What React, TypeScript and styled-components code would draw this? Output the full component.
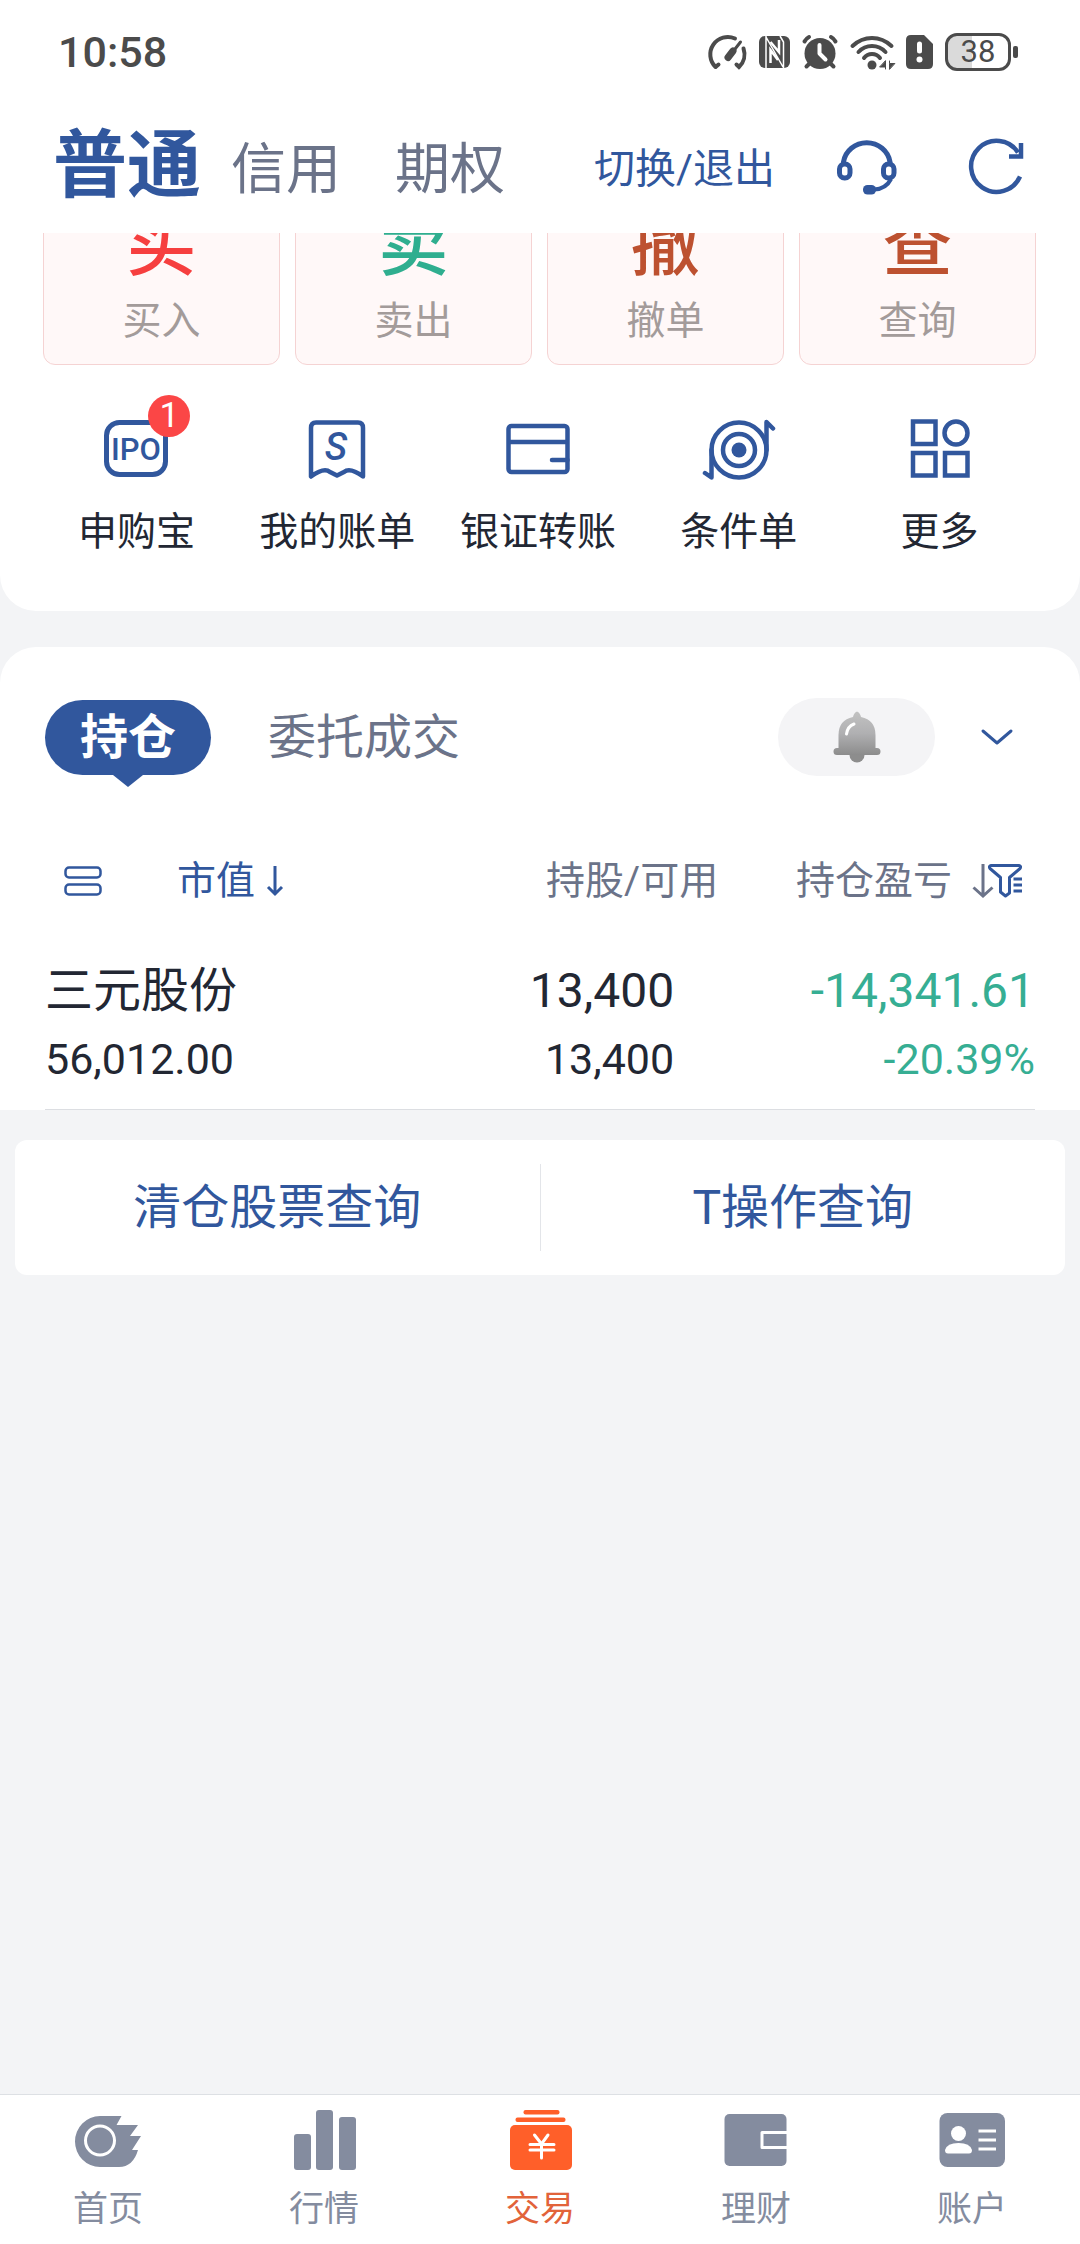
import React from "react";
import styled, { createGlobalStyle, css } from "styled-components";

const blue = "#31579d";
const slate = "#6b7389";
const ink = "#222733";
const green = "#36ae93";
const tabGray = "#848c9f";

const GlobalStyle = createGlobalStyle`
  * { box-sizing: border-box; }
  body {
    margin: 0;
    background: #f3f4f6;
    color: ${ink};
    font-family: Roboto, "Noto Sans CJK SC", sans-serif;
    font-size: 39px;
  }
  button {
    margin: 0;
    padding: 0;
    border: 0;
    background: none;
    color: inherit;
    font: inherit;
    cursor: pointer;
  }
  a { color: inherit; text-decoration: none; }
  svg { display: block; flex: none; overflow: visible; }
`;

const Page = styled.div`
  display: flex;
  flex-direction: column;
  min-height: 100vh;
`;

/* status bar */

const StatusBar = styled.div`
  display: flex;
  align-items: center;
  justify-content: space-between;
  padding: 26px 62px 0 58px;
  background: #fff;
  color: #4b4b4b;
`;

const Clock = styled.time`
  font-size: 43px;
  font-weight: 500;
  line-height: 52px;
`;

const StatusIcons = styled.div`
  display: flex;
  align-items: center;
  gap: 12px;
`;

const Battery = styled.div`
  display: flex;
  align-items: center;
  gap: 2px;
`;

const BatteryBody = styled.div`
  width: 66px;
  height: 38px;
  border: 3px solid #4b4b4b;
  border-radius: 12px;
  background: linear-gradient(90deg, #dadada 40%, #fff 40%);
  font-size: 31px;
  line-height: 32px;
  text-align: center;
`;

const BatteryTip = styled.div`
  width: 5px;
  height: 12px;
  border-radius: 2px;
  background: #4b4b4b;
`;

/* header */

const Header = styled.header`
  display: flex;
  align-items: center;
  justify-content: space-between;
  min-height: 155px;
  padding: 20px 51px 0 53px;
  background: #fff;
`;

const AccountTabs = styled.nav`
  display: flex;
  align-items: center;
  gap: 30px;
`;

const AccountTab = styled.button<{ $active?: boolean }>`
  padding: 6px 24px 0 0;
  color: ${slate};
  font-size: 55px;
  line-height: 80px;
  ${(p) =>
    p.$active &&
    css`
      padding: 0;
      color: ${blue};
      font-size: 74px;
      font-weight: 700;
    `}
`;

const HeaderActions = styled.div`
  display: flex;
  align-items: center;
  gap: 60px;
`;

const HeaderIcons = styled.div`
  display: flex;
  gap: 66px;
`;

const SwitchButton = styled.button`
  padding-top: 6px;
  color: ${blue};
  font-size: 41px;
  line-height: 48px;
`;

const IconButton = styled.button<{ $width: number }>`
  display: flex;
  align-items: center;
  justify-content: center;
  width: ${(p) => p.$width}px;
  height: 64px;
`;

/* upper panel */

const UpperPanel = styled.section`
  border-radius: 0 0 36px 36px;
  background: #fff;
`;

const ActionStrip = styled.div`
  display: grid;
  grid-template-columns: repeat(4, 1fr);
  align-content: end;
  gap: 15px;
  height: 132px;
  padding: 0 44px 0 43px;
  overflow: hidden;
`;

const ActionCard = styled.button`
  display: flex;
  flex-direction: column;
  align-items: center;
  gap: 20px;
  padding: 32px 0 23px;
  border: 1px solid #f5d3d3;
  border-radius: 12px;
  background: #fff8f8;
`;

const ActionGlyph = styled.span<{ $color: string }>`
  color: ${(p) => p.$color};
  font-size: 70px;
  font-weight: 500;
  line-height: 70px;
`;

const ActionLabel = styled.span`
  color: #a39b9a;
  font-size: 39px;
  line-height: 40px;
`;

const Shortcuts = styled.div`
  display: grid;
  grid-template-columns: repeat(5, 1fr);
  padding: 49px 40px 55px 36px;
`;

const Shortcut = styled.button`
  display: flex;
  flex-direction: column;
  align-items: center;
  gap: 22px;
  line-height: 48px;
  white-space: nowrap;
`;

const ShortcutIcon = styled.span`
  position: relative;
  color: ${blue};
`;

const Badge = styled.span`
  position: absolute;
  top: -19px;
  right: -18px;
  width: 42px;
  height: 42px;
  border-radius: 50%;
  background: #fb4646;
  color: #fff;
  font-size: 35px;
  line-height: 42px;
  text-align: center;
`;

/* holdings panel */

const HoldingsPanel = styled.section`
  margin-top: 36px;
  padding: 51px 45px 0;
  border-radius: 36px 36px 0 0;
  background: #fff;
`;

const HoldingsBar = styled.div`
  display: flex;
  align-items: center;
  height: 78px;
`;

const ActiveTab = styled.button`
  position: relative;
  padding: 0 35px;
  border-radius: 38px;
  background: ${blue};
  color: #fff;
  font-size: 48px;
  font-weight: 700;
  line-height: 75px;

  &::after {
    content: "";
    position: absolute;
    top: 100%;
    left: 50%;
    margin-left: -15px;
    border: 15px solid transparent;
    border-top: 12px solid ${blue};
    border-bottom: 0;
  }
`;

const PlainTab = styled.button`
  margin-left: 57px;
  margin-right: auto;
  color: ${slate};
  font-size: 48px;
  line-height: 75px;
`;

const BellButton = styled.button`
  display: flex;
  align-items: center;
  justify-content: center;
  width: 157px;
  height: 78px;
  margin-right: 24px;
  border-radius: 39px;
  background: #f4f4f6;
`;

const HoldingsTable = styled.table`
  width: 100%;
  margin-top: 72px;
  border-collapse: collapse;
  table-layout: fixed;
`;

const HeadCell = styled.th<{ $width: string; $active?: boolean }>`
  width: ${(p) => p.$width};
  height: 66px;
  padding: 0;
  color: ${(p) => (p.$active ? blue : slate)};
  font-size: 39px;
  font-weight: 400;
  line-height: 66px;
`;

const HeadContent = styled.div<{ $start?: boolean }>`
  display: flex;
  align-items: center;
  justify-content: ${(p) => (p.$start ? "flex-start" : "flex-end")};
`;

const ListToggle = styled.button`
  padding: 0 75px 0 19px;
`;

const SortButton = styled.button`
  display: flex;
  align-items: center;
  gap: 12px;
`;

const FilterSort = styled(SortButton)`
  gap: 20px;
  padding-right: 13px;
`;

const Cell = styled.td<{ $tone?: string; $inset?: boolean }>`
  padding: 43px ${(p) => (p.$inset ? 44 : 0)}px 16px 0;
  border-bottom: 1px solid #dcdee2;
  color: ${(p) => p.$tone || ink};
  text-align: right;

  &:first-child { text-align: left; }
`;

const Primary = styled.div`
  font-size: 48px;
  line-height: 68px;
`;

const Secondary = styled.div`
  font-size: 43px;
  line-height: 68px;
`;

const QueryBar = styled.div`
  display: flex;
  align-items: center;
  height: 135px;
  margin: 30px 15px 0;
  border-radius: 12px;
  background: #fff;
`;

const QueryLink = styled.a`
  flex: 1;
  color: ${blue};
  font-size: 48px;
  line-height: 87px;
  text-align: center;

  & + & { border-left: 1px solid #e3e5e9; }
`;

/* bottom navigation */

const BottomNav = styled.nav`
  display: grid;
  grid-template-columns: repeat(5, 1fr);
  margin-top: auto;
  border-top: 1px solid #dde0e4;
  background: #fff;
`;

const NavItem = styled.a<{ $active?: boolean }>`
  display: flex;
  flex-direction: column;
  align-items: center;
  gap: 18px;
  padding: 13px 0 14px;
  color: ${(p) => (p.$active ? "#e2633a" : tabGray)};
  font-size: 35px;
  line-height: 40px;
`;

/* drawings */

const GaugeIcon = () => (
  <svg width="39" height="36" fill="none" stroke="currentColor" strokeWidth="4" strokeLinecap="round">
    <path d="M7.6 33 L10.5 30.5 M7.6 33 A17.5 17.5 0 0 1 27 4.5" />
    <path d="M35.5 14.5 A17.5 17.5 0 0 1 31 33 L28.5 30.5" />
    <path d="M20 24 L32.5 8" strokeWidth="3" />
    <path d="M20 23.5 L25 17" strokeWidth="7" />
  </svg>
);

const NfcIcon = () => (
  <svg width="31" height="32" fill="none">
    <rect width="31" height="32" rx="6" fill="currentColor" />
    <g stroke="#fff">
      <path d="M7 0 V32 M7 1 L24 31 M24.5 32 V6 L21 0" strokeWidth="1.5" />
      <path d="M11.5 27 V14 L19 24 M11.5 6 L20 16 V4" strokeWidth="2.5" />
    </g>
  </svg>
);

const AlarmIcon = () => (
  <svg width="36" height="36" fill="none" stroke="currentColor" strokeWidth="4" strokeLinecap="round" strokeLinejoin="round">
    <circle cx="18" cy="19.5" r="15.5" fill="currentColor" stroke="none" />
    <path d="M2.5 7.5 Q4 4.5 7 3 M33.5 7.5 Q32 4.5 29 3 M4.5 32.5 L8 29 M31.5 32.5 L28 29" />
    <path d="M17.5 11 V19.5 L23.5 25.5" stroke="#fff" />
  </svg>
);

const WifiIcon = () => (
  <svg width="44" height="36" fill="none" stroke="currentColor" strokeWidth="4" strokeLinecap="round">
    <path d="M2.5 12 Q11 4 22 4 Q33 4 41.5 12" />
    <path d="M8.5 18 Q14 12 22 12 Q30 12 35.5 18" />
    <path d="M14 24 Q17 20 22 20 Q27 20 30 24" />
    <circle cx="22" cy="31" r="4.5" fill="currentColor" stroke="none" />
    <path d="M35.5 27 V33 H30 Z M35.5 33 V35 M39.5 35 V29.5 H44.5 Z M39.5 29 V27" fill="currentColor" strokeWidth="1" />
  </svg>
);

const SimIcon = () => (
  <svg width="27" height="34" fill="none">
    <path d="M5 0 H18 L27 9 V29 Q27 34 22 34 H5 Q0 34 0 29 V5 Q0 0 5 0 Z" fill="currentColor" />
    <path d="M13.5 9 V16" stroke="#fff" strokeWidth="5" strokeLinecap="round" />
    <circle cx="13.5" cy="24.5" r="3" fill="#fff" />
  </svg>
);

const HeadsetIcon = () => (
  <svg width="62" height="60" fill="none" stroke={blue} strokeWidth="5">
    <path d="M7.5 28 V26 A23.5 22.5 0 0 1 54 26 V28" />
    <rect x="3.5" y="28" width="10.5" height="14" rx="5" />
    <rect x="47.5" y="28" width="10.5" height="14" rx="5" />
    <path d="M55 43 Q50 53 38 53.5" strokeWidth="4" />
    <rect x="27" y="49" width="13" height="9.5" rx="4.5" fill={blue} stroke="none" />
  </svg>
);

const RefreshIcon = () => (
  <svg width="60" height="60" fill="none" stroke={blue} strokeWidth="4.5">
    <path d="M53 40.5 A25.5 25.5 0 1 1 51 16.5" />
    <path d="M54 7 V20.5 H42" />
  </svg>
);

const IpoIcon = () => (
  <svg width="72" height="72" fill="none" stroke="currentColor" strokeWidth="5">
    <rect x="6.5" y="8.5" width="59" height="52" rx="13" />
    <text x="36" y="46" fill="currentColor" stroke="none" fontSize="31" fontWeight="500" textAnchor="middle">
      IPO
    </text>
  </svg>
);

const BillIcon = () => (
  <svg width="72" height="72" fill="none" stroke="currentColor" strokeWidth="4.5" strokeLinejoin="round">
    <path d="M10 62.5 V14 Q10 8.5 15 8.5 H57 Q62 8.5 62 14 V62.5 Q49 53 43 58 L36 61.5 L29 58 Q23 53 10 62.5 Z" />
    <text x="35" y="46" fill="currentColor" stroke="none" fontSize="38" fontStyle="italic" fontWeight="500" textAnchor="middle">
      S
    </text>
  </svg>
);

const TransferIcon = () => (
  <svg width="72" height="72" fill="none" stroke="currentColor" strokeWidth="4.5">
    <rect x="6.5" y="12" width="59" height="46" rx="3" />
    <path d="M6.5 28 H65.5" />
    <path d="M50 46 H65.5" strokeLinecap="round" />
  </svg>
);

const TargetIcon = () => (
  <svg width="72" height="72" fill="none" stroke="currentColor" strokeWidth="4.5" strokeLinecap="round" strokeLinejoin="round">
    <circle cx="36" cy="36" r="27.5" />
    <circle cx="36" cy="36" r="16" />
    <circle cx="36" cy="36" r="7.5" fill="currentColor" stroke="none" />
    <path d="M8.5 36 V63.5 L2 59 M63.5 36 V8 L70 14.5" />
  </svg>
);

const MoreIcon = () => (
  <svg width="72" height="72" fill="none" stroke="currentColor" strokeWidth="4.5">
    <rect x="9" y="7.5" width="22.5" height="22.5" />
    <circle cx="52" cy="19" r="11.5" />
    <rect x="9" y="39" width="22.5" height="22.5" />
    <rect x="41" y="39" width="22.5" height="22.5" />
  </svg>
);

const BellIcon = () => (
  <svg width="48" height="52" fill="none">
    <defs>
      <linearGradient id="bellBody" x1="0" y1="0" x2="0" y2="1">
        <stop offset="0" stopColor="#c2c2c2" />
        <stop offset="0.5" stopColor="#b0b0b2" />
        <stop offset="1" stopColor="#8c8c8c" />
      </linearGradient>
    </defs>
    <circle cx="24" cy="44" r="7.5" fill="#8d8d8d" />
    <path
      d="M24 0.5 Q27 1.5 28 6 Q42.5 9 42.5 24 V37 H44 Q47.5 37 47.5 40.5 Q47.5 44 44 44 H4 Q0.5 44 0.5 40.5 Q0.5 37 4 37 H5.5 V24 Q5.5 9 20 6 Q21 1.5 24 0.5 Z"
      fill="url(#bellBody)"
    />
    <path d="M13.5 23 Q14.5 15.5 21 13" stroke="#fff" strokeWidth="3" strokeLinecap="round" />
  </svg>
);

const ChevronIcon = () => (
  <svg width="32" height="16" fill="none" stroke={blue} strokeWidth="3" strokeLinecap="round" strokeLinejoin="round">
    <path d="M2 2 L16 14 L30 2" />
  </svg>
);

const ListIcon = () => (
  <svg width="38" height="30" fill="none" stroke={blue} strokeWidth="2.5">
    <rect x="1.5" y="1.5" width="35" height="10" rx="3.5" />
    <rect x="1.5" y="18.5" width="35" height="10" rx="3.5" />
  </svg>
);

const DownArrowIcon = () => (
  <svg width="16" height="30" fill="none" stroke={blue} strokeWidth="3">
    <path d="M8 0 V28 M1 21 L8 28 L15 21" />
  </svg>
);

const SortFilterIcon = () => (
  <svg width="50" height="36" fill="none" strokeWidth="3">
    <path d="M11 1 V33 M1.5 24.5 L11 33 L20.5 24.5" stroke={slate} />
    <path
      d="M19 2.5 H47 Q49.5 3 48 5.5 L37.5 14.5 V30 L33.5 33 L28.5 29 V14.5 L18 5.5 Q16.5 3 19 2.5 Z M41.5 16 H50 M41.5 22 H50 M41.5 28 H50"
      stroke={blue}
      strokeLinejoin="round"
    />
  </svg>
);

const HomeNavIcon = () => (
  <svg width="72" height="64" fill="none">
    <path
      d="M28 8 H49.5 L44.5 17 H66 L58 28 H69 L60 42 H66 Q61 59 47 59 H28 A25 25.5 0 0 1 28 8 Z"
      fill="currentColor"
    />
    <circle cx="28" cy="32.5" r="14.5" stroke="#fff" strokeWidth="3" />
  </svg>
);

const MarketNavIcon = () => (
  <svg width="72" height="64" fill="currentColor">
    <rect x="6" y="26" width="17" height="36" rx="3" />
    <rect x="28" y="2" width="17" height="60" rx="3" />
    <rect x="51" y="9" width="17" height="53" rx="3" />
  </svg>
);

const TradeNavIcon = () => (
  <svg width="72" height="64" fill="#ff5f29">
    <rect x="19.5" y="2" width="36" height="4.5" rx="2" />
    <rect x="11.5" y="9.5" width="50" height="4.5" rx="2" />
    <rect x="6" y="17" width="62" height="45" rx="5" />
    <path d="M30.5 27 L37.5 36 L44 27 M26 36.5 H50 M26 42 H50 M37.5 36 V50" fill="none" stroke="#fff" strokeWidth="3" strokeLinecap="round" />
  </svg>
);

const WealthNavIcon = () => (
  <svg width="72" height="64" fill="none">
    <rect x="4.5" y="6" width="62" height="52" rx="5" fill="currentColor" />
    <path d="M67 24.5 H42 V39.5 H67" stroke="#fff" strokeWidth="3" strokeLinejoin="round" />
  </svg>
);

const ProfileNavIcon = () => (
  <svg width="72" height="64" fill="#fff">
    <rect x="3.5" y="5" width="65.5" height="54" rx="8" fill="currentColor" />
    <circle cx="22.5" cy="25.5" r="7.5" />
    <path d="M9 42 Q11 35 22.5 35 Q34 35 36 42 Q36 45.5 33 45.5 H12 Q9 45.5 9 42 Z" />
    <path d="M42.5 23 H60 M42.5 32 H60 M42.5 41 H60" stroke="#fff" strokeWidth="3" />
  </svg>
);

/* data */

const actions = [
  { glyph: "买", label: "买入", color: "#f63f3f" },
  { glyph: "卖", label: "卖出", color: "#2fae8f" },
  { glyph: "撤", label: "撤单", color: "#bd5130" },
  { glyph: "查", label: "查询", color: "#bd5130" },
];

const shortcuts = [
  { label: "申购宝", icon: <IpoIcon />, badge: 1 },
  { label: "我的账单", icon: <BillIcon /> },
  { label: "银证转账", icon: <TransferIcon /> },
  { label: "条件单", icon: <TargetIcon /> },
  { label: "更多", icon: <MoreIcon /> },
];

const holdings = [
  {
    name: "三元股份",
    value: "56,012.00",
    shares: "13,400",
    available: "13,400",
    profit: "-14,341.61",
    rate: "-20.39%",
  },
];

const navItems = [
  { label: "首页", icon: <HomeNavIcon /> },
  { label: "行情", icon: <MarketNavIcon /> },
  { label: "交易", icon: <TradeNavIcon />, active: true },
  { label: "理财", icon: <WealthNavIcon /> },
  { label: "账户", icon: <ProfileNavIcon /> },
];

export default function App() {
  return (
    <Page>
      <GlobalStyle />
      <StatusBar>
        <Clock>10:58</Clock>
        <StatusIcons>
          <GaugeIcon />
          <NfcIcon />
          <AlarmIcon />
          <WifiIcon />
          <SimIcon />
          <Battery>
            <BatteryBody>38</BatteryBody>
            <BatteryTip />
          </Battery>
        </StatusIcons>
      </StatusBar>

      <Header>
        <AccountTabs>
          <AccountTab $active>普通</AccountTab>
          <AccountTab>信用</AccountTab>
          <AccountTab>期权</AccountTab>
        </AccountTabs>
        <HeaderActions>
          <SwitchButton>切换/退出</SwitchButton>
          <HeaderIcons>
            <IconButton $width={64} aria-label="客服">
              <HeadsetIcon />
            </IconButton>
            <IconButton $width={64} aria-label="刷新">
              <RefreshIcon />
            </IconButton>
          </HeaderIcons>
        </HeaderActions>
      </Header>

      <UpperPanel>
        <ActionStrip>
          {actions.map((a) => (
            <ActionCard key={a.label}>
              <ActionGlyph $color={a.color}>{a.glyph}</ActionGlyph>
              <ActionLabel>{a.label}</ActionLabel>
            </ActionCard>
          ))}
        </ActionStrip>
        <Shortcuts>
          {shortcuts.map((s) => (
            <Shortcut key={s.label}>
              <ShortcutIcon>
                {s.icon}
                {s.badge && <Badge>{s.badge}</Badge>}
              </ShortcutIcon>
              {s.label}
            </Shortcut>
          ))}
        </Shortcuts>
      </UpperPanel>

      <HoldingsPanel>
        <HoldingsBar>
          <ActiveTab>持仓</ActiveTab>
          <PlainTab>委托成交</PlainTab>
          <BellButton aria-label="提醒">
            <BellIcon />
          </BellButton>
          <IconButton $width={76} aria-label="展开">
            <ChevronIcon />
          </IconButton>
        </HoldingsBar>
        <HoldingsTable>
          <thead>
            <tr>
              <HeadCell $width="40%" $active>
                <HeadContent $start>
                  <ListToggle aria-label="列表样式">
                    <ListIcon />
                  </ListToggle>
                  <SortButton>
                    市值
                    <DownArrowIcon />
                  </SortButton>
                </HeadContent>
              </HeadCell>
              <HeadCell $width="28%">
                <HeadContent>持股/可用</HeadContent>
              </HeadCell>
              <HeadCell $width="32%">
                <HeadContent>
                  <FilterSort>
                    持仓盈亏
                    <SortFilterIcon />
                  </FilterSort>
                </HeadContent>
              </HeadCell>
            </tr>
          </thead>
          <tbody>
            {holdings.map((h) => (
              <tr key={h.name}>
                <Cell>
                  <Primary>{h.name}</Primary>
                  <Secondary>{h.value}</Secondary>
                </Cell>
                <Cell $inset>
                  <Primary>{h.shares}</Primary>
                  <Secondary>{h.available}</Secondary>
                </Cell>
                <Cell $tone={green}>
                  <Primary>{h.profit}</Primary>
                  <Secondary>{h.rate}</Secondary>
                </Cell>
              </tr>
            ))}
          </tbody>
        </HoldingsTable>
      </HoldingsPanel>

      <QueryBar>
        <QueryLink href="#cleared">清仓股票查询</QueryLink>
        <QueryLink href="#t-trades">T操作查询</QueryLink>
      </QueryBar>

      <BottomNav>
        {navItems.map((n) => (
          <NavItem key={n.label} href={"#" + n.label} $active={n.active}>
            {n.icon}
            {n.label}
          </NavItem>
        ))}
      </BottomNav>
    </Page>
  );
}
